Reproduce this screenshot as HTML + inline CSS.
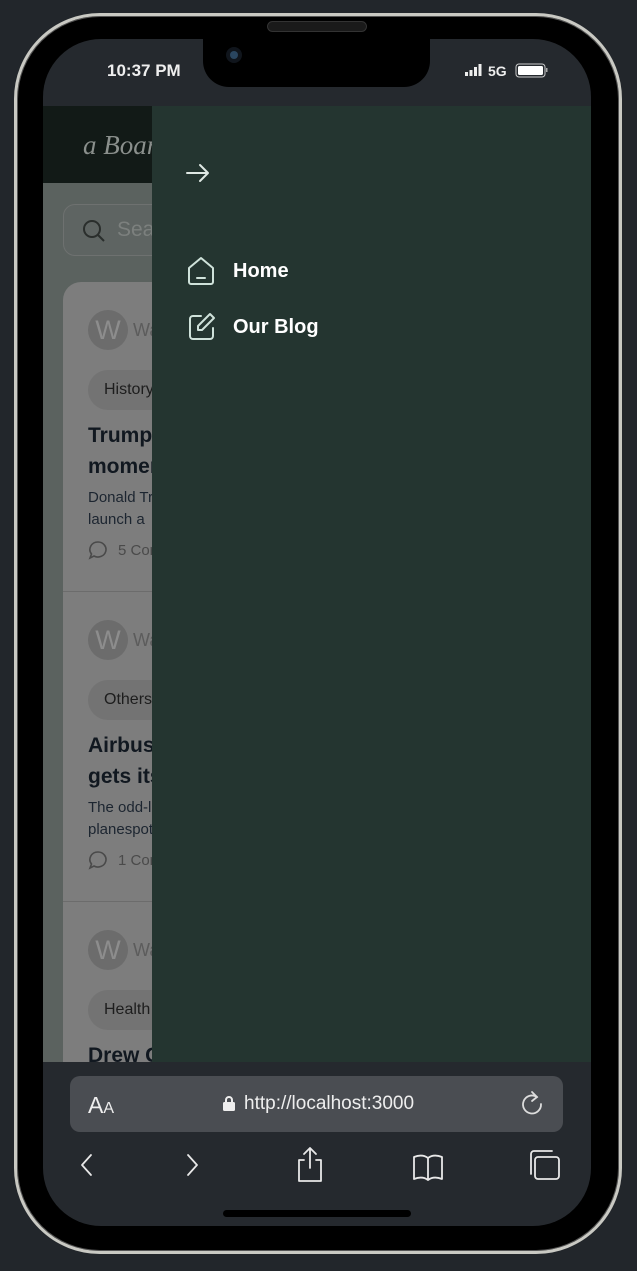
<!DOCTYPE html>
<html><head><meta charset="utf-8"><style>
*{box-sizing:border-box;margin:0;padding:0}
body{width:637px;height:1271px;background:#22262b;position:relative;overflow:hidden;font-family:"Liberation Sans",Roboto,sans-serif}
.frame{position:absolute;left:14px;top:13px;width:608px;height:1241px;border-radius:86px;background:#000;border:3px solid #c9c9c3;box-shadow:0 0 0 1px #555 inset}
.screen{position:absolute;left:43px;top:39px;width:548px;height:1187px;border-radius:58px;background:#25292e;overflow:hidden}
.notch{position:absolute;left:203px;top:39px;width:227px;height:48px;background:#000;border-radius:0 0 26px 26px}
.spk{position:absolute;left:267px;top:21px;width:100px;height:11px;border-radius:6px;background:#1a1a1a;border:1px solid #333}
.cam{position:absolute;left:226px;top:47px;width:16px;height:16px;border-radius:50%;background:#10151c}
.cam:after{content:"";position:absolute;left:4px;top:4px;width:8px;height:8px;border-radius:50%;background:#2a4660}
.time{position:absolute;left:107px;top:61px;color:#eee;font-weight:bold;font-size:17px}
.view{position:absolute;left:43px;top:106px;width:548px;height:956px;background:#5b625f;overflow:hidden}
.hdr{position:absolute;left:0;top:0;width:548px;height:77px;background:#121a17}
.logo{position:absolute;left:40px;top:24px;font-family:"Liberation Serif",serif;font-style:italic;font-size:27px;color:#8a8f8c}
.search{position:absolute;left:20px;top:98px;width:400px;height:52px;border:1px solid #6e7170;border-radius:12px;background:#5e6462}
.search span{position:absolute;left:53px;top:13px;font-size:21px;color:#7c807e}
.card{position:absolute;left:20px;top:176px;width:500px;height:900px;background:#7d7d7d;border-radius:18px}
.item{position:absolute;left:0;width:500px;height:310px;border-bottom:1px solid #6c6c6c}
.av{position:absolute;left:25px;top:28px;width:40px;height:40px;border-radius:50%;background:#6c6c6c;color:#8d8d8d;font-size:27px;text-align:center;line-height:40px}
.nm{position:absolute;left:70px;top:38px;color:#5c5c5c;font-size:18px}
.pill{position:absolute;left:25px;top:88px;width:100px;height:40px;border-radius:20px;background:#737373;color:#1d1d1d;font-size:16px;padding:11px 16px}
.t{position:absolute;left:25px;top:138px;font-weight:bold;font-size:21px;line-height:31px;color:#111820}
.d{position:absolute;left:25px;top:205px;font-size:15px;line-height:22px;color:#1c2530}
.c{position:absolute;left:25px;top:258px;font-size:15px;color:#4a4a4a}
.c svg{vertical-align:-5px;margin-right:10px}
.drawer{position:absolute;left:109px;top:0;width:439px;height:956px;background:#243530}
.nav{position:absolute;left:81px;color:#fff;font-weight:bold;font-size:20px}
.bar{position:absolute;left:70px;top:1076px;width:493px;height:56px;border-radius:10px;background:#4a4d52}
</style></head><body>
<div class="frame"></div>
<div class="screen"></div>
<div class="spk"></div>
<div class="notch"></div>
<div class="cam"></div>
<div class="time">10:37 PM</div>
<svg style="position:absolute;left:465px;top:63px" width="85" height="16"><rect x="0" y="9" width="3" height="4" fill="#eee"/><rect x="4.5" y="7" width="3" height="6" fill="#eee"/><rect x="9" y="4" width="3" height="9" fill="#eee"/><rect x="13.5" y="1" width="3" height="12" fill="#eee"/><text x="23" y="13" fill="#eee" font-family="Liberation Sans" font-weight="bold" font-size="14">5G</text><rect x="51" y="1" width="29" height="13" rx="3" fill="none" stroke="#ccc"/><rect x="53" y="3" width="25" height="9" rx="1.5" fill="#fff"/><rect x="81" y="5" width="1.5" height="4" fill="#aaa"/></svg>
<div class="view">
 <div class="hdr"><div class="logo">a Board</div></div>
 <div class="search"><svg style="position:absolute;left:18px;top:14px" width="24" height="24" fill="none" stroke="#2a2e2c" stroke-width="2"><circle cx="10" cy="10" r="8"/><path d="M16 16l6 6"/></svg><span>Search</span></div>
 <div class="card">
  <div class="item" style="top:0"><div class="av">W</div><div class="nm">Wanda</div><div class="pill">History</div><div class="t">Trump calls<br>moment</div><div class="d">Donald Trump<br>launch a</div><div class="c"><svg width="20" height="20" fill="none" stroke="#4a4a4a" stroke-width="1.6"><path d="M10 2a8 7.5 0 1 1-4 14l-4 2 1.5-4A8 7.5 0 0 1 10 2z"/></svg>5 Comments</div></div>
  <div class="item" style="top:310px"><div class="av">W</div><div class="nm">Wanda</div><div class="pill">Others</div><div class="t">Airbus<br>gets its</div><div class="d">The odd-looking<br>planespotters</div><div class="c"><svg width="20" height="20" fill="none" stroke="#4a4a4a" stroke-width="1.6"><path d="M10 2a8 7.5 0 1 1-4 14l-4 2 1.5-4A8 7.5 0 0 1 10 2z"/></svg>1 Comment</div></div>
  <div class="item" style="top:620px"><div class="av">W</div><div class="nm">Wanda</div><div class="pill">Health</div><div class="t">Drew G</div></div>
 </div>
 <div class="drawer">
  <svg style="position:absolute;left:33px;top:56px" width="26" height="22" fill="none" stroke="#dfe8e4" stroke-width="2" stroke-linecap="round" stroke-linejoin="round"><path d="M2 11h21M15 3l8 8-8 8"/></svg>
  <svg style="position:absolute;left:35px;top:150px" width="30" height="30" fill="none" stroke="#cfe2da" stroke-width="2" stroke-linejoin="round"><path d="M2 12L14 2l12 10v14a2 2 0 0 1-2 2H4a2 2 0 0 1-2-2z"/><path d="M10 22h8" stroke-linecap="round"/></svg>
  <div class="nav" style="top:154px">Home</div>
  <svg style="position:absolute;left:36px;top:206px" width="30" height="30" fill="none" stroke="#cfe2da" stroke-width="2" stroke-linecap="round" stroke-linejoin="round"><path d="M13 4H5a3 3 0 0 0-3 3v17a3 3 0 0 0 3 3h17a3 3 0 0 0 3-3v-8"/><path d="M22 2l4 4-12 12H10v-4z"/></svg>
  <div class="nav" style="top:210px">Our Blog</div>
 </div>
</div>
<div class="bar"></div>
<div style="position:absolute;left:88px;top:1092px;color:#eee;font-size:23px">A<span style="font-size:16px">A</span></div>
<svg style="position:absolute;left:222px;top:1095px" width="14" height="17"><path d="M4 7V5a3 3 0 0 1 6 0v2" fill="none" stroke="#eee" stroke-width="2"/><rect x="1" y="7" width="12" height="9" rx="1.5" fill="#eee"/></svg>
<div style="position:absolute;left:244px;top:1093px;color:#eee;font-size:19px">http://localhost:3000</div>
<svg style="position:absolute;left:519px;top:1090px" width="26" height="28" fill="none" stroke="#ddd" stroke-width="1.8" stroke-linecap="round"><path d="M18 7A9 9 0 1 0 22 14"/><path d="M13 2l5 5-5 4"/></svg>
<svg style="position:absolute;left:70px;top:1145px" width="500" height="40" fill="none" stroke="#e8e8e8" stroke-width="1.8" stroke-linecap="round" stroke-linejoin="round">
<path d="M21 10l-9 10 9 10"/><path d="M118 10l9 10-9 10"/>
<path d="M234 15h-5v21h22V15h-5M240 3v20M234 9l6-6 6 6"/>
<path d="M344 12c5-2 10-2 14 1v22c-4-3-9-3-14-1zM358 13c4-3 9-3 14-1v22c-5-2-10-2-14 1"/>
<rect x="465" y="12" width="24" height="22" rx="3"/><path d="M461 29V9a3 3 0 0 1 3-3h18"/>
</svg>
<div style="position:absolute;left:223px;top:1210px;width:188px;height:7px;border-radius:4px;background:#000"></div>
</body></html>
